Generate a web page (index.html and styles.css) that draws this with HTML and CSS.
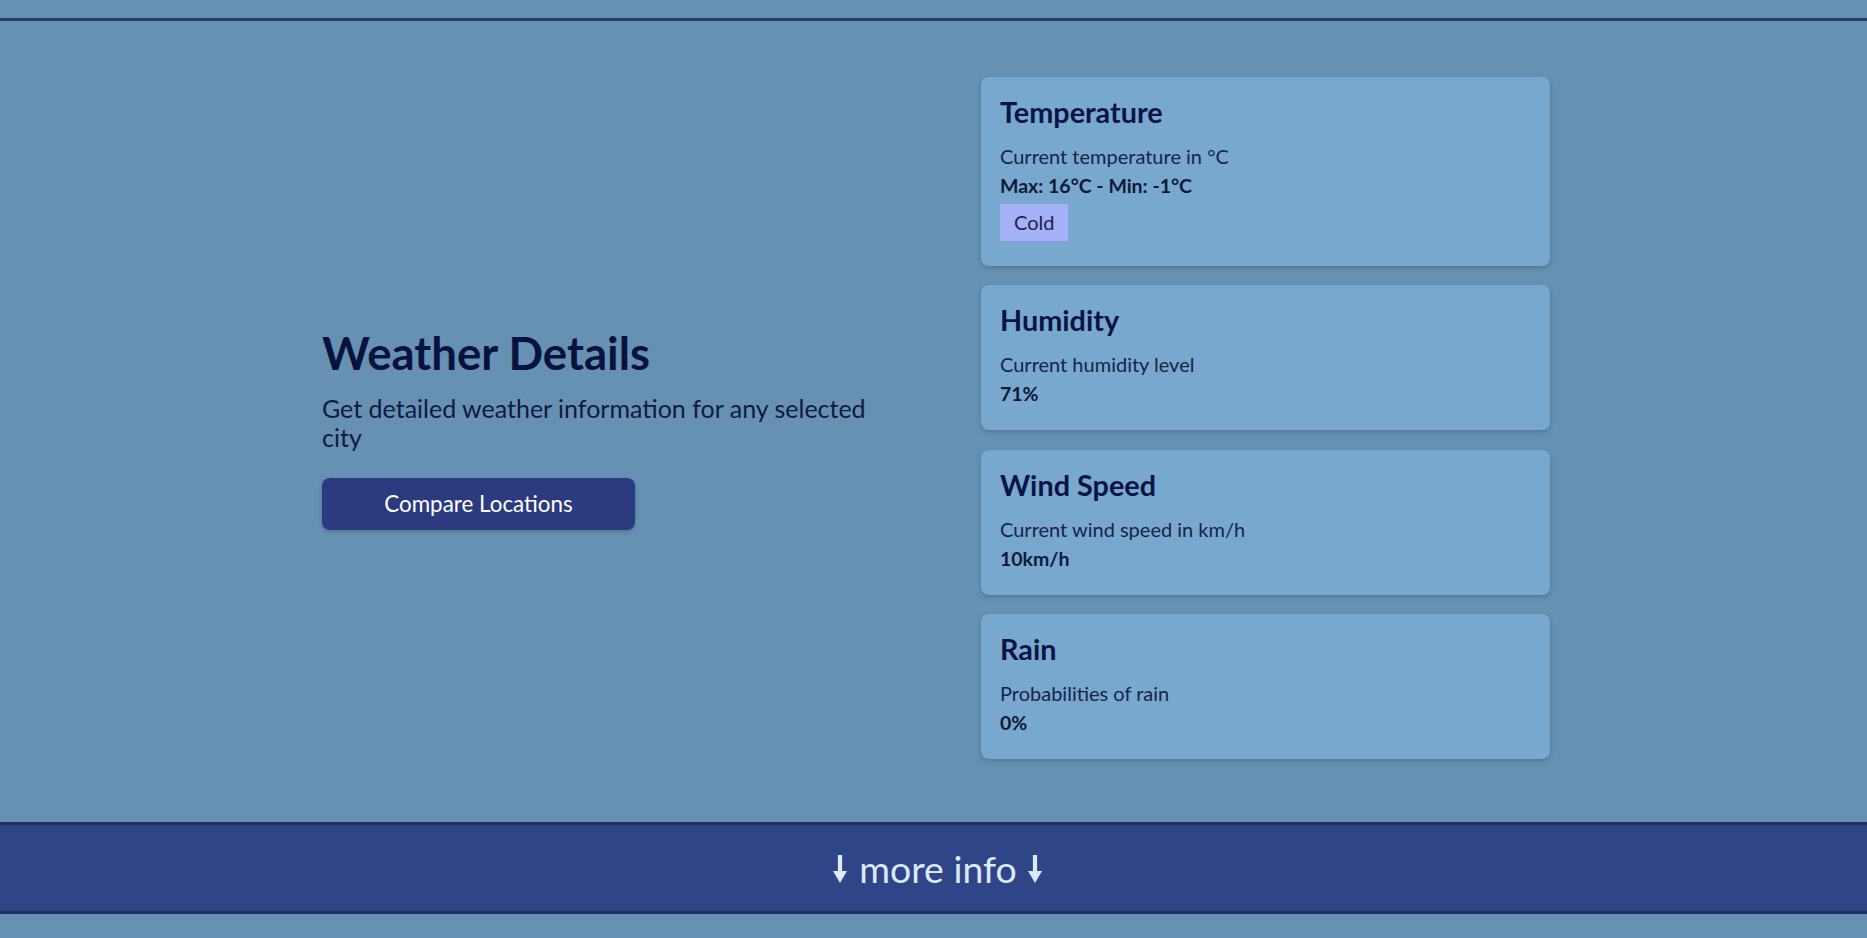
FILE: index.html
```
<!DOCTYPE html>
<html lang="en">
<head>
<meta charset="utf-8">
<title>Weather Details</title>
<link rel="stylesheet" href="styles.css">
</head>
<body>
<header class="topbar"></header>
<main class="hero">
  <section class="intro">
    <h1 class="intro-title">Weather Details</h1>
    <p class="intro-text">Get detailed weather information for any selected city</p>
    <button class="compare-btn" type="button">Compare Locations</button>
  </section>
  <section class="cards">
    <article class="card">
      <h3 class="card-title">Temperature</h3>
      <p class="card-desc">Current temperature in °C</p>
      <p class="card-value">Max: 16°C - Min: -1°C</p>
      <span class="badge">Cold</span>
    </article>
    <article class="card">
      <h3 class="card-title">Humidity</h3>
      <p class="card-desc">Current humidity level</p>
      <p class="card-value">71%</p>
    </article>
    <article class="card">
      <h3 class="card-title">Wind Speed</h3>
      <p class="card-desc">Current wind speed in km/h</p>
      <p class="card-value">10km/h</p>
    </article>
    <article class="card">
      <h3 class="card-title">Rain</h3>
      <p class="card-desc">Probabilities of rain</p>
      <p class="card-value">0%</p>
    </article>
  </section>
</main>
<div class="more-bar">
  <span class="more-text"><svg class="arrow arrow-left" width="14" height="28" viewBox="0 0 14 28" aria-hidden="true"><rect x="4.9" y="0" width="4.2" height="17" fill="currentColor"/><path d="M0 16 L14 16 L7 28 Z" fill="currentColor"/></svg> more info <svg class="arrow arrow-right" width="14" height="28" viewBox="0 0 14 28" aria-hidden="true"><rect x="4.9" y="0" width="4.2" height="17" fill="currentColor"/><path d="M0 16 L14 16 L7 28 Z" fill="currentColor"/></svg></span>
</div>
</body>
</html>
```
FILE: styles.css
```
* { box-sizing: border-box; }
html, body { margin: 0; padding: 0; }
body {
  background: #6691b3;
  font-family: Lato, "Noto Sans", "DejaVu Sans", sans-serif;
  color: #141d40;
  min-height: 938px;
}
.topbar {
  height: 21px;
  border-bottom: 3px solid #2b3a6c;
}
.hero {
  display: grid;
  grid-template-columns: 569px 569px;
  column-gap: 90px;
  align-items: center;
  padding: 56px 0 63px 322px;
}
.intro {
  padding-top: 18px;
}
.intro-title {
  margin: 0;
  font-size: 45.6px;
  line-height: 57.6px;
  font-weight: 700;
  color: #08123f;
}
.intro-text {
  margin: 12px 0 0;
  font-size: 25px;
  line-height: 29px;
  color: #111a3e;
}
.compare-btn {
  margin-top: 26px;
  width: 313px;
  height: 52px;
  padding: 0;
  border: none;
  border-radius: 8px;
  background: #2c3a80;
  color: #ffffff;
  font-family: Lato, "Noto Sans", sans-serif;
  font-size: 22.4px;
  line-height: 28px;
  box-shadow: 0 2px 4px rgba(0, 0, 0, 0.2);
  cursor: pointer;
}
.cards {
  display: flex;
  flex-direction: column;
  gap: 19.3px;
}
.card {
  background: #78a8ce;
  border-radius: 8px;
  padding: 18px 19px 25px;
  box-shadow: 0 2px 5px rgba(0, 0, 0, 0.18);
}
.card-title {
  margin: 0;
  font-size: 28.8px;
  line-height: 34px;
  font-weight: 700;
  color: #0a1444;
}
.card-desc {
  margin: 16px 0 0;
  font-size: 20px;
  line-height: 22px;
  color: #18234a;
}
.card-value {
  margin: 8px 0 0;
  font-size: 19.5px;
  line-height: 22px;
  font-weight: 700;
  color: #0f1838;
}
.badge {
  display: inline-block;
  margin-top: 7px;
  padding: 7px 14px;
  font-size: 20px;
  line-height: 23px;
  background: #a5b1f7;
  color: #1a2348;
}
.more-bar {
  background: #304488;
  border-top: 3px solid #233064;
  border-bottom: 3px solid #233064;
  padding: 20px 0 18px 8px;
  text-align: center;
}
.more-text {
  font-size: 37.4px;
  line-height: 48px;
  color: #dde9ff;
}
.arrow {
  display: inline-block;
  vertical-align: baseline;
}
.arrow-left { margin-right: 3px; }
.arrow-right { margin-left: 2px; }
```
